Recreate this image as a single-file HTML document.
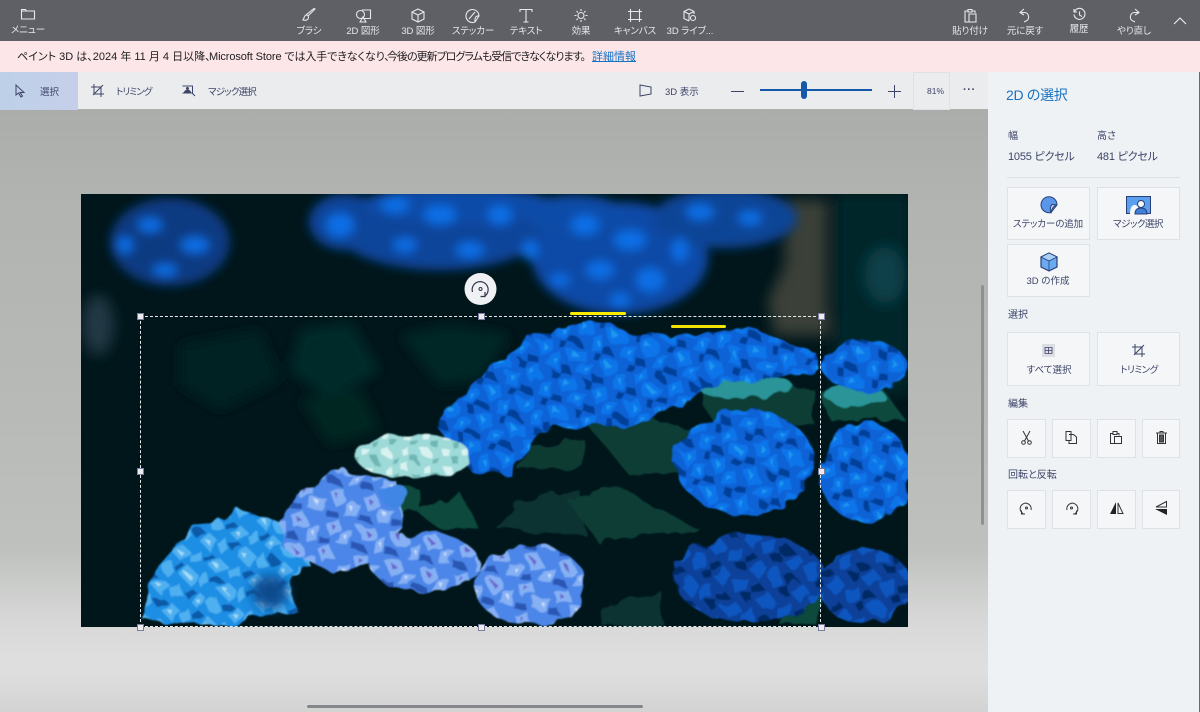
<!DOCTYPE html>
<html lang="ja"><head><meta charset="utf-8"><title>ペイント 3D</title>
<style>
html,body{margin:0;padding:0}
body{width:1200px;height:712px;overflow:hidden;position:relative;font-family:"Liberation Sans","Noto Sans CJK JP",sans-serif;background:#b5b7b5;font-feature-settings:"palt" 1}
.a{position:absolute;white-space:nowrap;line-height:1}
.c{transform:translateX(-50%)}
.t{color:#e6e6ea;font-size:9.5px;letter-spacing:-.1px}
.l{color:#3c4468;font-size:9.5px}
.b{position:absolute;box-sizing:border-box;background:#f5f6f8;border:1px solid #dfe1e6}
.h{color:#3c4468;font-size:10px}
svg.i{position:absolute;overflow:visible;fill:none}
.w{stroke:#e8e8ec;stroke-width:1.1}
.d{stroke:#33333a;stroke-width:1}
.m{position:absolute;width:7px;height:7px;box-sizing:border-box;background:#ececf0;border:1px solid #7c7ea0}
.n{font-size:11px;color:#1c1c1e;top:52px}
</style></head><body>
<div class="a" style="left:0;top:110px;width:988px;height:602px;background:linear-gradient(#abadab 0,#b1b3b1 80px,#b8bab8 300px,#bfc1bf 440px,#d8d9d8 515px,#dfdfdf 560px,#d2d3d2 602px)"></div>

<svg style="position:absolute;left:81px;top:194px" width="827" height="433" viewBox="81 194 827 433">
<defs>
<filter id="b1" x="-30%" y="-30%" width="160%" height="160%"><feGaussianBlur stdDeviation="7"/></filter>
<filter id="b3" x="-30%" y="-30%" width="160%" height="160%"><feGaussianBlur stdDeviation="5"/></filter>
<filter id="b4" x="-30%" y="-30%" width="160%" height="160%"><feGaussianBlur stdDeviation="6"/></filter>
<filter id="r" x="-10%" y="-10%" width="120%" height="120%"><feTurbulence type="fractalNoise" baseFrequency=".05" numOctaves="2" seed="4"/><feDisplacementMap in="SourceGraphic" scale="14"/><feGaussianBlur stdDeviation=".8"/></filter>
<pattern id="pb" width="34" height="30" patternUnits="userSpaceOnUse" patternTransform="rotate(18)">
<rect width="34" height="30" fill="#0a62d6"/>
<path d="M2 8 16 1 22 12 10 20Z M20 16 33 13 31 27 19 28Z" fill="#0c74ea"/>
<path d="M8 6 14 9 10 14Z M24 19 29 18 27 24Z" fill="#1c98f0"/>
<path d="M0 23 10 23 14 30 0 30Z M26 0 34 0 34 8 28 8Z" fill="#063f98"/></pattern>
<pattern id="pd" width="36" height="32" patternUnits="userSpaceOnUse" patternTransform="rotate(-12)">
<rect width="36" height="32" fill="#0a4098"/>
<path d="M2 8 16 2 22 14 9 20Z M20 18 34 15 32 29 20 30Z" fill="#0b56c0"/>
<path d="M0 25 10 25 14 32 0 32Z M26 0 36 0 36 9 29 9Z" fill="#042a66"/></pattern>
<pattern id="pc" width="30" height="26" patternUnits="userSpaceOnUse" patternTransform="rotate(-20)">
<rect width="30" height="26" fill="#1e8ee4"/>
<path d="M3 5 15 1 20 11 8 17Z M18 14 29 12 28 24 18 24Z" fill="#4fb0f0"/>
<path d="M0 20 9 20 12 26 0 26Z" fill="#0c5aa8"/><path d="M8 5 13 8 10 12Z" fill="#a6dcf8"/></pattern>
<pattern id="pw" width="20" height="16" patternUnits="userSpaceOnUse">
<rect width="20" height="16" fill="#9ddad8"/>
<path d="M2 2 10 1 9 8 3 8Z" fill="#d8f2f0"/><path d="M11 9 19 9 17 15 12 15Z" fill="#6fb6b4"/></pattern>
<pattern id="pv" width="34" height="30" patternUnits="userSpaceOnUse" patternTransform="rotate(10)">
<rect width="34" height="30" fill="#4c86e8"/>
<path d="M2 7 15 2 21 13 8 19Z M20 16 33 13 31 27 19 28Z" fill="#86b0f4"/>
<path d="M8 7 13 9 10 13Z" fill="#6a62c8"/><path d="M24 18 28 18 27 23Z" fill="#cfe0fb"/>
<path d="M0 23 10 23 14 30 0 30Z" fill="#2a56b4"/></pattern>
</defs>
<rect x="81" y="194" width="827" height="433" fill="#00161a"/>
<g filter="url(#b1)">
<rect x="835" y="194" width="75" height="200" fill="#02262a"/>
<ellipse cx="885" cy="275" rx="20" ry="28" fill="#07404a"/>
<rect x="785" y="200" width="42" height="135" fill="#3a3f37"/>
<path d="M768 300 790 255 820 240 830 335 775 335Z" fill="#3a3f37"/>
<ellipse cx="98" cy="325" rx="16" ry="30" fill="#233844"/>
</g>
<g filter="url(#b4)">
<path d="M300 330 350 322 380 370 330 400 290 370Z" fill="#032c29"/>
<path d="M400 335 450 325 510 335 480 380 440 385Z" fill="#032826"/>
<path d="M180 345 260 330 280 380 220 410 180 385Z" fill="#022220"/>
<path d="M300 400 360 390 380 430 330 445Z" fill="#032523"/>
</g>
<g filter="url(#b3)">
<ellipse cx="170" cy="242" rx="60" ry="44" fill="#083a82"/>
<ellipse cx="345" cy="222" rx="36" ry="28" fill="#0a449a"/>
<ellipse cx="440" cy="228" rx="105" ry="42" fill="#0a449a"/>
<ellipse cx="460" cy="205" rx="95" ry="18" fill="#0a4ca8"/>
<ellipse cx="620" cy="258" rx="88" ry="56" fill="#0a4aa6"/>
<ellipse cx="575" cy="215" rx="50" ry="20" fill="#0a4ca8"/>
<ellipse cx="725" cy="218" rx="72" ry="30" fill="#0a4496"/>
<g fill="#0d6ee6">
<ellipse cx="150" cy="225" rx="12" ry="7"/><ellipse cx="195" cy="245" rx="14" ry="8"/><ellipse cx="165" cy="270" rx="12" ry="6"/><ellipse cx="125" cy="245" rx="8" ry="8"/>
<ellipse cx="340" cy="225" rx="14" ry="12"/><ellipse cx="395" cy="205" rx="14" ry="8"/><ellipse cx="440" cy="215" rx="16" ry="10"/><ellipse cx="470" cy="250" rx="14" ry="8"/><ellipse cx="405" cy="245" rx="12" ry="7"/><ellipse cx="500" cy="215" rx="12" ry="10"/><ellipse cx="530" cy="250" rx="8" ry="10"/>
<ellipse cx="585" cy="225" rx="14" ry="10"/><ellipse cx="630" cy="240" rx="16" ry="10"/><ellipse cx="600" cy="270" rx="14" ry="9"/><ellipse cx="650" cy="280" rx="14" ry="12"/><ellipse cx="620" cy="300" rx="10" ry="7"/><ellipse cx="680" cy="250" rx="8" ry="12"/><ellipse cx="560" cy="280" rx="10" ry="6"/>
<ellipse cx="700" cy="212" rx="14" ry="8"/><ellipse cx="750" cy="218" rx="12" ry="7"/>
</g>
</g>
<g filter="url(#r)">
<path d="M517 470 530 445 585 440 585 468Z" fill="#0a3a32"/>
<path d="M590 428 640 415 690 430 680 470 630 476Z" fill="#0a3d34"/>
<path d="M498 530 520 500 580 490 585 535Z" fill="#083230"/>
<path d="M567 500 620 488 700 530 630 535 600 545Z" fill="#0a3c34"/>
<path d="M335 490 380 480 420 490 420 512 385 510Z" fill="#0d4a3c"/>
<path d="M415 510 460 492 480 530 440 530Z" fill="#0d4a3c"/>
<path d="M790 560 825 590 815 625 780 625Z" fill="#0d4a3c"/>
<path d="M610 605 660 590 665 625 600 625Z" fill="#083230"/>
<path d="M820 392 880 385 905 420 830 420Z" fill="#0c4a3c"/>
<path d="M700 390 810 385 815 425 710 420Z" fill="#0c3e36"/>
<ellipse cx="745" cy="386" rx="48" ry="12" fill="#2a9498"/>
<ellipse cx="855" cy="396" rx="30" ry="10" fill="#2a9498"/>
</g>
<g filter="url(#r)">
<path d="M435 425 470 385 535 335 590 320 640 335 690 335 750 328 815 352 822 372 760 380 700 385 690 400 640 425 540 430 510 475 470 470Z" fill="url(#pb)"/>
<ellipse cx="865" cy="366" rx="42" ry="26" fill="url(#pb)"/>
<ellipse cx="745" cy="462" rx="70" ry="52" fill="url(#pb)"/>
<ellipse cx="865" cy="472" rx="46" ry="50" fill="url(#pb)"/>
<ellipse cx="750" cy="578" rx="76" ry="44" fill="url(#pd)"/>
<ellipse cx="865" cy="586" rx="46" ry="38" fill="url(#pd)"/>
<path d="M143 620 155 570 190 530 240 510 300 530 310 565 292 575 296 610 250 618 240 627Z" fill="url(#pc)"/>
<path d="M280 520 300 490 345 470 395 480 405 530 375 565 330 570 285 550Z" fill="url(#pv)"/>
<ellipse cx="425" cy="563" rx="54" ry="30" fill="url(#pv)"/>
<ellipse cx="530" cy="585" rx="56" ry="40" fill="url(#pv)"/>
<ellipse cx="412" cy="455" rx="58" ry="22" fill="url(#pw)"/>
<ellipse cx="395" cy="495" rx="14" ry="11" fill="#3f86e4"/>
</g>
<ellipse cx="270" cy="592" rx="18" ry="17" fill="#0e4a8c" filter="url(#b4)"/>
</svg>

<div class="a" style="left:140px;top:316px;width:681px;height:311px;box-sizing:border-box;border:1px dashed #e8e8e8"></div>
<div class="a" style="left:570px;top:312px;width:56px;height:3px;background:#ffec00;border-radius:2px"></div>
<div class="a" style="left:671px;top:325px;width:55px;height:3px;background:#f4e200;border-radius:2px"></div>
<div class="m" style="left:137px;top:313px"></div><div class="m" style="left:478px;top:313px"></div><div class="m" style="left:818px;top:313px"></div>
<div class="m" style="left:137px;top:468px"></div><div class="m" style="left:818px;top:468px"></div>
<div class="m" style="left:137px;top:624px"></div><div class="m" style="left:478px;top:624px"></div><div class="m" style="left:818px;top:624px"></div>
<svg class="i" style="left:464px;top:273px" width="33" height="33" viewBox="0 0 33 33"><circle cx="16.500" cy="16" r="16" fill="#f0f1f4"/><path d="M8.500 19A8 8 0 1 1 21 23" stroke="#33364a" stroke-width="1.200"/><path d="M21 19v4.500h-4.500" stroke="#33364a" stroke-width="1.200"/><circle cx="16.500" cy="16" r="1.500" stroke="#33364a"/></svg>

<div class="a" style="left:0;top:0;width:1200px;height:41px;background:#5f6066"></div>
<svg class="i w" style="left:21px;top:8px" width="14" height="12" viewBox="0 0 14 12"><path d="M.5 1.500h4l1 1.500h8v8H.5Z M.5 3h5"/></svg>
<div class="a t c" style="left:28px;top:26px">メニュー</div>
<svg class="i w" style="left:301px;top:8px" width="16" height="16" viewBox="0 0 16 16"><path d="M14 1 7 8 5.500 6.500 13 .5Z M5.500 7C3 7 3.500 10 2 12c3 1 6-.5 5.500-3.500"/></svg>
<div class="a t c" style="left:309px;top:27px">ブラシ</div>
<svg class="i w" style="left:356px;top:9px" width="16" height="14" viewBox="0 0 16 14"><circle cx="4.500" cy="5.500" r="4"/><path d="M6 1h8.500v8.500H7 M4 13 7 8l3 5Z"/></svg>
<div class="a t c" style="left:363px;top:27px">2D 図形</div>
<svg class="i w" style="left:411px;top:8px" width="14" height="15" viewBox="0 0 14 15"><path d="M7 1 13 4v7l-6 3-6-3V4Z M1 4l6 3 6-3 M7 7v7"/></svg>
<div class="a t c" style="left:418px;top:27px">3D 図形</div>
<svg class="i w" style="left:465px;top:8px" width="15" height="15" viewBox="0 0 15 15"><path d="M10 14A6.500 6.500 0 1 1 14 8Z M14 8c-3-.5-4.500 1.500-4 6 M4 11l6-7"/></svg>
<div class="a t c" style="left:473px;top:27px">ステッカー</div>
<svg class="i w" style="left:519px;top:8px" width="14" height="15" viewBox="0 0 14 15"><path d="M1 4V1.500h12V4 M7 1.500V14 M4.500 14h5"/></svg>
<div class="a t c" style="left:526px;top:27px">テキスト</div>
<svg class="i w" style="left:574px;top:8px" width="14" height="15" viewBox="0 0 14 15"><circle cx="7" cy="7.500" r="3"/><path d="M7 1v2M7 12v2M.5 7.500h2M11.500 7.500h2M2.500 3l1.500 1.500M10 10.500l1.500 1.500M11.500 3 10 4.500M4 10.500 2.500 12"/></svg>
<div class="a t c" style="left:581px;top:27px">効果</div>
<svg class="i w" style="left:628px;top:9px" width="14" height="13" viewBox="0 0 14 13"><path d="M0 2.500h14M0 10.500h14M2.500 0v13M11.500 0v13"/></svg>
<div class="a t c" style="left:635px;top:27px">キャンバス</div>
<svg class="i w" style="left:683px;top:8px" width="14" height="15" viewBox="0 0 14 15"><path d="M6 1 11 3.500V6 M6 13 1 10.500v-7L6 1 M1 3.500 6 6l5-2.500 M6 6v7"/><circle cx="10" cy="10" r="2.500"/></svg>
<div class="a t c" style="left:690px;top:27px">3D ライブ...</div>
<svg class="i w" style="left:964px;top:8px" width="13" height="15" viewBox="0 0 13 15"><path d="M4 3H1v11h4 M4 1.500h4V4H4Z M8 3h3v2 M5 6h7v8H5Z"/></svg>
<div class="a t c" style="left:970px;top:27px">貼り付け</div>
<svg class="i w" style="left:1019px;top:8px" width="12" height="15" viewBox="0 0 12 15"><path d="M5 1 1 4.500 5 7 M1 4.500h5a4.500 4.500 0 0 1 1 8.500l-2 1"/></svg>
<div class="a t c" style="left:1025px;top:27px">元に戻す</div>
<svg class="i w" style="left:1073px;top:8px" width="13" height="13" viewBox="0 0 13 13"><path d="M1.500 3.500A5.500 5.500 0 1 1 1 6.500 M1 1v3h3 M6.500 3.500V7l2.500 1.500"/></svg>
<div class="a t c" style="left:1079px;top:25px">履歴</div>
<svg class="i w" style="left:1128px;top:8px" width="12" height="15" viewBox="0 0 12 15"><path d="M7 1l4 3.500L7 7 M11 4.500H6a4.500 4.500 0 0 0-1 8.500l2 1"/></svg>
<div class="a t c" style="left:1134px;top:27px">やり直し</div>
<svg class="i" style="left:1173px;top:17px" width="14" height="8" viewBox="0 0 14 8"><path d="M1 7 7 1l6 6" stroke="#f0f0f0" stroke-width="1.100"/></svg>

<div class="a" style="left:0;top:41px;width:1200px;height:31px;background:#fde6e8"></div>
<div class="a n" style="left:17px">ペイント 3D は、2024 年 11 月 4 日以降、</div>
<div class="a n" style="left:209px;letter-spacing:-.1px">Microsoft Store では入手できなくなり、</div>
<div class="a n" style="left:387px;letter-spacing:-1px">今後の更新プログラムも受信できなくなります。</div>
<div class="a n" style="left:592px;color:#1573c4;text-decoration:underline">詳細情報</div>

<div class="a" style="left:0;top:72px;width:988px;height:38px;background:#ebecee;border-bottom:1px solid #aeb0ae;box-sizing:border-box"></div>
<div class="a" style="left:0;top:72px;width:78px;height:38px;background:linear-gradient(90deg,#bdd0e8,#c6cfea)"></div>
<svg class="i" style="left:15px;top:84px" width="11" height="14" viewBox="0 0 11 14"><path d="M1 1v10l2.500-2L6 13l1.500-1-2.500-3.500h4Z" stroke="#3c4468"/></svg>
<div class="a l" style="left:40px;top:88px">選択</div>
<svg class="i" style="left:91px;top:84px" width="13" height="13" viewBox="0 0 13 13"><path d="M3 0v10h10 M0 3h10v10 M2 11 12 1" stroke="#3c4468"/></svg>
<div class="a l" style="left:116px;top:88px;letter-spacing:-.9px">トリミング</div>
<svg class="i" style="left:182px;top:85px" width="14" height="12" viewBox="0 0 14 12"><path d="M.5 1h10v7H.5" stroke="#3c4468"/><path d="M2 8C2 5 4 5 5.500 5S9 5 9 8Z" fill="#3c4468"/><circle cx="5.500" cy="3.500" r="1.500" fill="#3c4468"/><path d="M10 8l3 3" stroke="#3c4468"/></svg>
<div class="a l" style="left:208px;top:88px;letter-spacing:-.8px">マジック選択</div>
<svg class="i" style="left:639px;top:84px" width="13" height="13" viewBox="0 0 13 13"><path d="M1 1 12 3v7L1 12Z" stroke="#3c4468"/></svg>
<div class="a l" style="left:665px;top:88px">3D 表示</div>
<div class="a" style="left:731px;top:91px;width:13px;height:1px;background:#3c4468"></div>
<div class="a" style="left:760px;top:89px;width:112px;height:2px;background:#1558aa"></div>
<div class="a" style="left:801px;top:81px;width:6px;height:18px;background:#1558aa;border-radius:3px"></div>
<div class="a" style="left:888px;top:91px;width:13px;height:1px;background:#3c4468"></div>
<div class="a" style="left:894px;top:85px;width:1px;height:13px;background:#3c4468"></div>
<div class="a" style="left:913px;top:72px;width:37px;height:38px;box-sizing:border-box;border:1px solid #dfe1e6"></div>
<div class="a l" style="left:927px;top:87px;font-size:8.500px">81%</div>
<div class="a" style="left:963px;top:85px;font-size:11px;color:#3c4468;font-weight:bold;letter-spacing:.6px">···</div>

<div class="a" style="left:988px;top:72px;width:212px;height:640px;background:#eff2f5"></div>
<div class="a" style="left:1199px;top:72px;width:1px;height:640px;background:#6a6a6e"></div>
<div class="a" style="left:1006px;top:88px;font-size:14px;color:#1872c0;letter-spacing:-.3px">2D の選択</div>
<div class="a h" style="left:1008px;top:132px">幅</div>
<div class="a h" style="left:1097px;top:132px">高さ</div>
<div class="a" style="left:1008px;top:152px;font-size:11px;letter-spacing:-.2px;color:#3c4468">1055 ピクセル</div>
<div class="a" style="left:1097px;top:152px;font-size:11px;letter-spacing:-.2px;color:#3c4468">481 ピクセル</div>
<div class="a" style="left:1007px;top:177px;width:173px;height:1px;background:#dde0e8"></div>

<div class="b" style="left:1007px;top:187px;width:83px;height:53px"></div>
<svg class="i" style="left:1040px;top:196px" width="18" height="18" viewBox="0 0 18 18"><path d="M11 16.500A8 8 0 1 1 17 9Z" fill="#5a96ea" stroke="#2a3f78"/><path d="M17 9c-3 .5-5 3-6 7.500-1-2-1-6 1-8Z" fill="#cfe0f8" stroke="#2a3f78"/></svg>
<div class="a l c" style="left:1048px;top:220px;letter-spacing:-.1px">ステッカーの追加</div>
<div class="b" style="left:1097px;top:187px;width:83px;height:53px"></div>
<svg class="i" style="left:1126px;top:196px" width="25" height="19" viewBox="0 0 25 19"><rect x=".5" y=".5" width="24" height="17" fill="#5aa0ee" stroke="#2a3f78"/><path d="M4 18c0-8 3-9 5-9 3 0 4 3 4 9Z" fill="#f5f6f8"/><path d="M9 18c0-5 3-6 6-6s6 1 6 6Z" fill="#3f7fd8" stroke="#2a3f78"/><circle cx="15" cy="8" r="3.500" fill="#f5f6f8" stroke="#2a3f78"/></svg>
<div class="a l c" style="left:1138px;top:220px;letter-spacing:-.5px">マジック選択</div>
<div class="b" style="left:1007px;top:244px;width:83px;height:53px"></div>
<svg class="i" style="left:1040px;top:252px" width="18" height="20" viewBox="0 0 18 20"><path d="M9 1 17 5v10l-8 4-8-4V5Z" fill="#6aaaf0" stroke="#2a3f78" stroke-width="1.200"/><path d="M1 5l8 4 8-4-8-4Z" fill="#a9d0f8" stroke="#2a3f78" stroke-width=".8"/><path d="M9 9v10" stroke="#2a3f78" stroke-width=".8"/></svg>
<div class="a l c" style="left:1048px;top:277px">3D の作成</div>

<div class="a h" style="left:1008px;top:311px">選択</div>
<div class="b" style="left:1007px;top:332px;width:83px;height:54px"></div>
<svg class="i" style="left:1042px;top:344px" width="13" height="13" viewBox="0 0 13 13"><rect width="13" height="13" fill="#dcdee4"/><path d="M3 3.500h7v6H3Z M6.500 3.500v6M3 6.500h7" stroke="#3c4468" stroke-width=".8"/></svg>
<div class="a l c" style="left:1049px;top:366px">すべて選択</div>
<div class="b" style="left:1097px;top:332px;width:83px;height:54px"></div>
<svg class="i" style="left:1132px;top:344px" width="13" height="13" viewBox="0 0 13 13"><path d="M3 0v10h10 M0 3h10v10 M2 11 12 1" stroke="#3c4468"/></svg>
<div class="a l c" style="left:1139px;top:366px;letter-spacing:-.5px">トリミング</div>

<div class="a h" style="left:1008px;top:400px">編集</div>
<div class="b" style="left:1007px;top:419px;width:39px;height:39px"></div>
<div class="b" style="left:1052px;top:419px;width:39px;height:39px"></div>
<div class="b" style="left:1097px;top:419px;width:39px;height:39px"></div>
<div class="b" style="left:1142px;top:419px;width:38px;height:39px"></div>
<svg class="i d" style="left:1021px;top:431px" width="11" height="14" viewBox="0 0 11 14"><path d="M2 0 7.500 10M9 0 3.500 10"/><circle cx="2.500" cy="11.500" r="1.800"/><circle cx="8.500" cy="11.500" r="1.800"/></svg>
<svg class="i d" style="left:1065px;top:431px" width="12" height="13" viewBox="0 0 12 13"><path d="M1 .5h5v9H1Z M4 3.500h4.500L11.500 6v6.500H4V9.500" fill="#f5f6f8"/></svg>
<svg class="i d" style="left:1110px;top:431px" width="12" height="13" viewBox="0 0 12 13"><path d="M3 2.500H.5v10h4 M3 .5h4v3H3Z M7 2.500h2v2 M4.500 5.500h7v7h-7Z"/></svg>
<svg class="i d" style="left:1156px;top:431px" width="11" height="13" viewBox="0 0 11 13"><path d="M0 2h11 M4 2V.5h3V2 M1.500 2v10.500h8V2"/><rect x="3.500" y="4" width="4" height="7" fill="#555"/></svg>

<div class="a h" style="left:1008px;top:471px">回転と反転</div>
<div class="b" style="left:1007px;top:490px;width:39px;height:39px"></div>
<div class="b" style="left:1052px;top:490px;width:39px;height:39px"></div>
<div class="b" style="left:1097px;top:490px;width:39px;height:39px"></div>
<div class="b" style="left:1142px;top:490px;width:38px;height:39px"></div>
<svg class="i d" style="left:1020px;top:502px" width="13" height="13" viewBox="0 0 13 13"><path d="M11 8A5.500 5.500 0 1 0 3 11.500M1.500 8.500v3.500H5"/><circle cx="6.500" cy="6" r="1"/></svg>
<svg class="i d" style="left:1065px;top:502px" width="13" height="13" viewBox="0 0 13 13"><path d="M2 8A5.500 5.500 0 1 1 10 11.500M11.500 8.500v3.500H8"/><circle cx="6.500" cy="6" r="1"/></svg>
<svg class="i" style="left:1110px;top:502px" width="14" height="12" viewBox="0 0 14 12"><path d="M6 0v12H0Z" fill="#222"/><path d="M8 1v10.500h5Z" stroke="#333"/></svg>
<svg class="i" style="left:1155px;top:501px" width="12" height="14" viewBox="0 0 12 14"><path d="M0 8h12v6Z" fill="#222"/><path d="M1 6h10.500V.5Z" stroke="#333"/></svg>

<div class="a" style="left:981px;top:285px;width:3px;height:240px;background:#8f918f;border-radius:2px"></div>
<div class="a" style="left:307px;top:705px;width:336px;height:3px;background:#84868a;border-radius:2px"></div>
</body></html>
